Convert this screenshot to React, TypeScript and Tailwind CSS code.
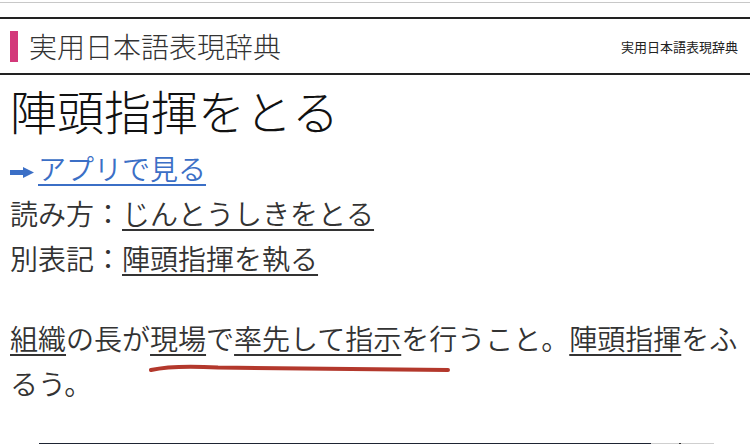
import React from "react";

function ArrowIcon() {
  return (
    <svg
      className="mr-[4px] inline-block align-middle"
      width="24"
      height="11"
      viewBox="0 0 24 11"
    >
      <path d="M0 3h13V0l11 5.5-11 5.5V8H0z" fill="#3b6fc6" />
    </svg>
  );
}

export default function App() {
  return (
    <div className="relative h-[444px] w-[750px] overflow-hidden bg-white font-['Noto_Sans_CJK_JP',sans-serif] text-[#333]">
      <div className="h-[2px]" />
      <div className="h-px bg-[#c8c8c8]" />
      <div className="h-[14px]" />
      <div className="h-[2px] bg-[#222]" />

      <header className="flex h-[54px] items-center justify-between pl-[10px] pr-[12px]">
        <div className="flex items-center">
          <span className="h-[31px] w-[8px] bg-[#d3397a]" />
          <span className="ml-[11px] text-[28px] leading-none font-light text-[#333]">
            実用日本語表現辞典
          </span>
        </div>
        <span className="text-[13px] leading-none text-[#222]">
          実用日本語表現辞典
        </span>
      </header>
      <div className="h-[2px] bg-[#222]" />

      <main className="relative px-[10px]">
        <h1 className="mt-[3px] text-[47px] leading-[64px] font-light text-[#111]">
          陣頭指揮をとる
        </h1>

        <div className="mt-[4px] text-[28px] leading-[44.8px] font-[350]">
          <p>
            <a className="text-[#3b6fc6] underline decoration-[1.5px] underline-offset-[4px]" href="#">
              <ArrowIcon />
              アプリで見る
            </a>
          </p>
          <p>
            読み方：
            <span className="underline decoration-[1.5px] underline-offset-[4px]">
              じんとうしきをとる
            </span>
          </p>
          <p>
            別表記：
            <span className="underline decoration-[1.5px] underline-offset-[4px]">
              陣頭指揮を執る
            </span>
          </p>
        </div>

        <p className="mt-[36px] text-[28px] leading-[44.8px] font-[350]">
          <span className="underline decoration-[1.5px] underline-offset-[4px]">組織</span>
          の長が
          <span className="underline decoration-[1.5px] underline-offset-[4px]">現場</span>
          で
          <span className="underline decoration-[1.5px] underline-offset-[4px]">率先して指示</span>
          を行うこと。
          <span className="underline decoration-[1.5px] underline-offset-[4px]">陣頭指揮</span>
          をふるう。
        </p>

        <svg
          className="pointer-events-none absolute left-[148px] top-[285px]"
          width="304"
          height="12"
          viewBox="0 0 304 12"
        >
          <path
            d="M3 7 Q 25 2 70 4.5 L 300 7"
            stroke="#b3382c"
            strokeWidth="4"
            strokeLinecap="round"
            fill="none"
          />
        </svg>

        <div className="mt-[37px] ml-[29px] flex h-[2px] w-[675px]">
          <div className="w-[612px] bg-[#1e2433]" />
          <div className="relative flex-1 bg-[#cfcfcf]">
            <div className="absolute left-[28px] top-0 h-[2px] w-[2px] bg-[#333]" />
          </div>
        </div>
      </main>
    </div>
  );
}
